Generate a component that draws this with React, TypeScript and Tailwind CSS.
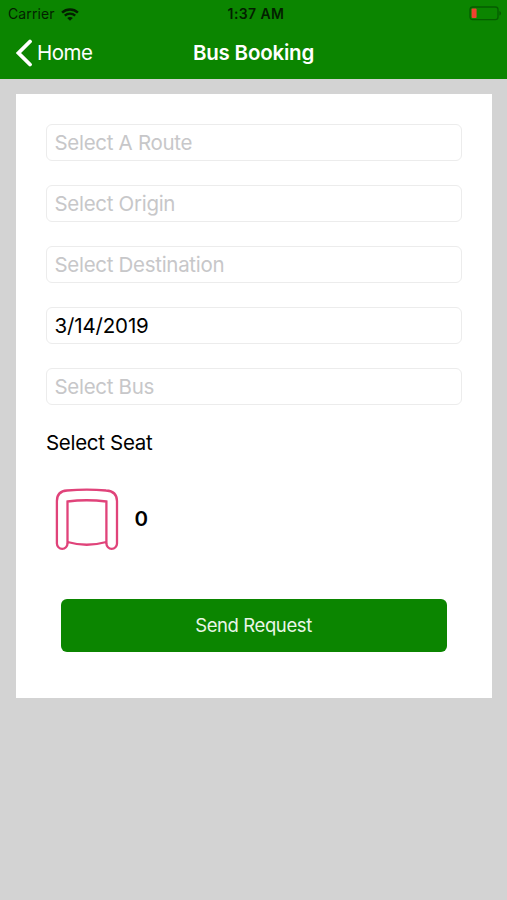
const fields = [
  { placeholder: "Select A Route", value: "" },
  { placeholder: "Select Origin", value: "" },
  { placeholder: "Select Destination", value: "" },
  { placeholder: "Select Date", value: "3/14/2019" },
  { placeholder: "Select Bus", value: "" },
];

function WifiIcon() {
  return (
    <svg width="18" height="13" viewBox="0 0 18 13" fill="none" stroke="#031f00" className="ml-[6px]">
      <path d="M1.1 4.6C5.500.5 12.500.5 16.900 4.600" strokeWidth="2.5" />
      <path d="M3.800 7.700c2.900-2.800 7.500-2.800 10.400 0" strokeWidth="2.300" />
      <path d="M9 12.800 6.200 10c1.600-1.400 4-1.400 5.600 0z" fill="#031f00" stroke="none" />
    </svg>
  );
}

function BatteryIcon() {
  return (
    <svg width="33" height="15" viewBox="0 0 33 15" fill="none">
      <rect x="1" y="1" width="28" height="12.6" rx="2.6" stroke="#065c00" strokeWidth="1.3" />
      <rect x="2.6" y="2.6" width="5" height="9.4" rx="1" fill="#f0422f" />
      <path d="M30.4 5c2.2.8 2.2 3.8 0 4.6z" fill="#065c00" />
    </svg>
  );
}

function SeatIcon() {
  return (
    <svg width="64" height="62" viewBox="0 0 64 62" fill="none" stroke="#e0437a" strokeWidth="2.3">
      <path d="M12.500 55v.5a5.300 5.300 0 0 1-10.600 0V13C1.900 6.500 5.500 3 12 2.500 25 1.300 39 1.300 51 2.500 58 3 62 6.500 62 13v42.500a5.300 5.300 0 0 1-10.600 0V55" />
      <path d="M12.500 55.500V13.500Q31.500 11 51.400 13.500V55.500" />
      <path d="M12.500 54Q31.500 59.500 51.400 54" />
    </svg>
  );
}

export default function App() {
  return (
    <div className="flex h-[900px] w-[507px] flex-col bg-[#d3d3d3] font-['Inter','Liberation_Sans',sans-serif] text-black">
      <header className="h-[79px] bg-[#0b8500]">
        <div className="grid h-7 grid-cols-3 items-center pl-2 pr-[5px] pb-px text-[#031f00]">
          <div className="flex items-center pt-px text-[14px] leading-none tracking-[0.1px]">
            <span>Carrier</span>
            <WifiIcon />
          </div>
          <div className="pl-[2px] pt-px text-center text-[14px] font-semibold leading-none tracking-[0.4px]">1:37 AM</div>
          <div className="flex justify-end">
            <BatteryIcon />
          </div>
        </div>
        <nav className="grid h-[49px] grid-cols-3 items-center px-4 text-white">
          <div className="flex items-center gap-1">
            <svg width="17" height="28" viewBox="0 0 17 28" fill="none" stroke="white" strokeWidth="3.8">
              <path d="M14 2.500 2.500 14l11.500 11.500" strokeLinejoin="miter" strokeLinecap="round" />
            </svg>
            <span className="pt-[2px] text-[20.5px] leading-none tracking-[-0.5px]">Home</span>
          </div>
          <h1 className="pt-[2px] text-center text-[20.5px] font-semibold leading-none tracking-[-0.2px]">Bus Booking</h1>
        </nav>
      </header>
      <main className="mx-[15.5px] mt-[15px] flex h-[604px] flex-col bg-white px-[30px] pt-[30px]">
        <div className="flex flex-col gap-6">
          {fields.map((f) => (
            <input
              key={f.placeholder}
              readOnly
              defaultValue={f.value}
              placeholder={f.placeholder}
              className="h-[37px] w-full rounded-[6px] border border-[#ececec] px-2 pb-px text-[20.5px] tracking-[-0.15px] placeholder:tracking-[-0.3px] placeholder:text-[#c7c7c9]"
            />
          ))}
        </div>
        <h2 className="mt-[25px] pl-[0.5px] text-[20.5px] leading-[26px] tracking-[-0.3px]">Select Seat</h2>
        <div className="mt-8 flex items-center gap-4 pl-[9px]">
          <SeatIcon />
          <span className="text-[20.5px] font-semibold leading-none">0</span>
        </div>
        <button className="mx-[15px] mt-[49px] h-[53px] rounded-[6px] bg-[#0b8500] pt-px text-[18.5px] tracking-[-0.4px] text-[#e9f6e8]">
          Send Request
        </button>
      </main>
    </div>
  );
}
